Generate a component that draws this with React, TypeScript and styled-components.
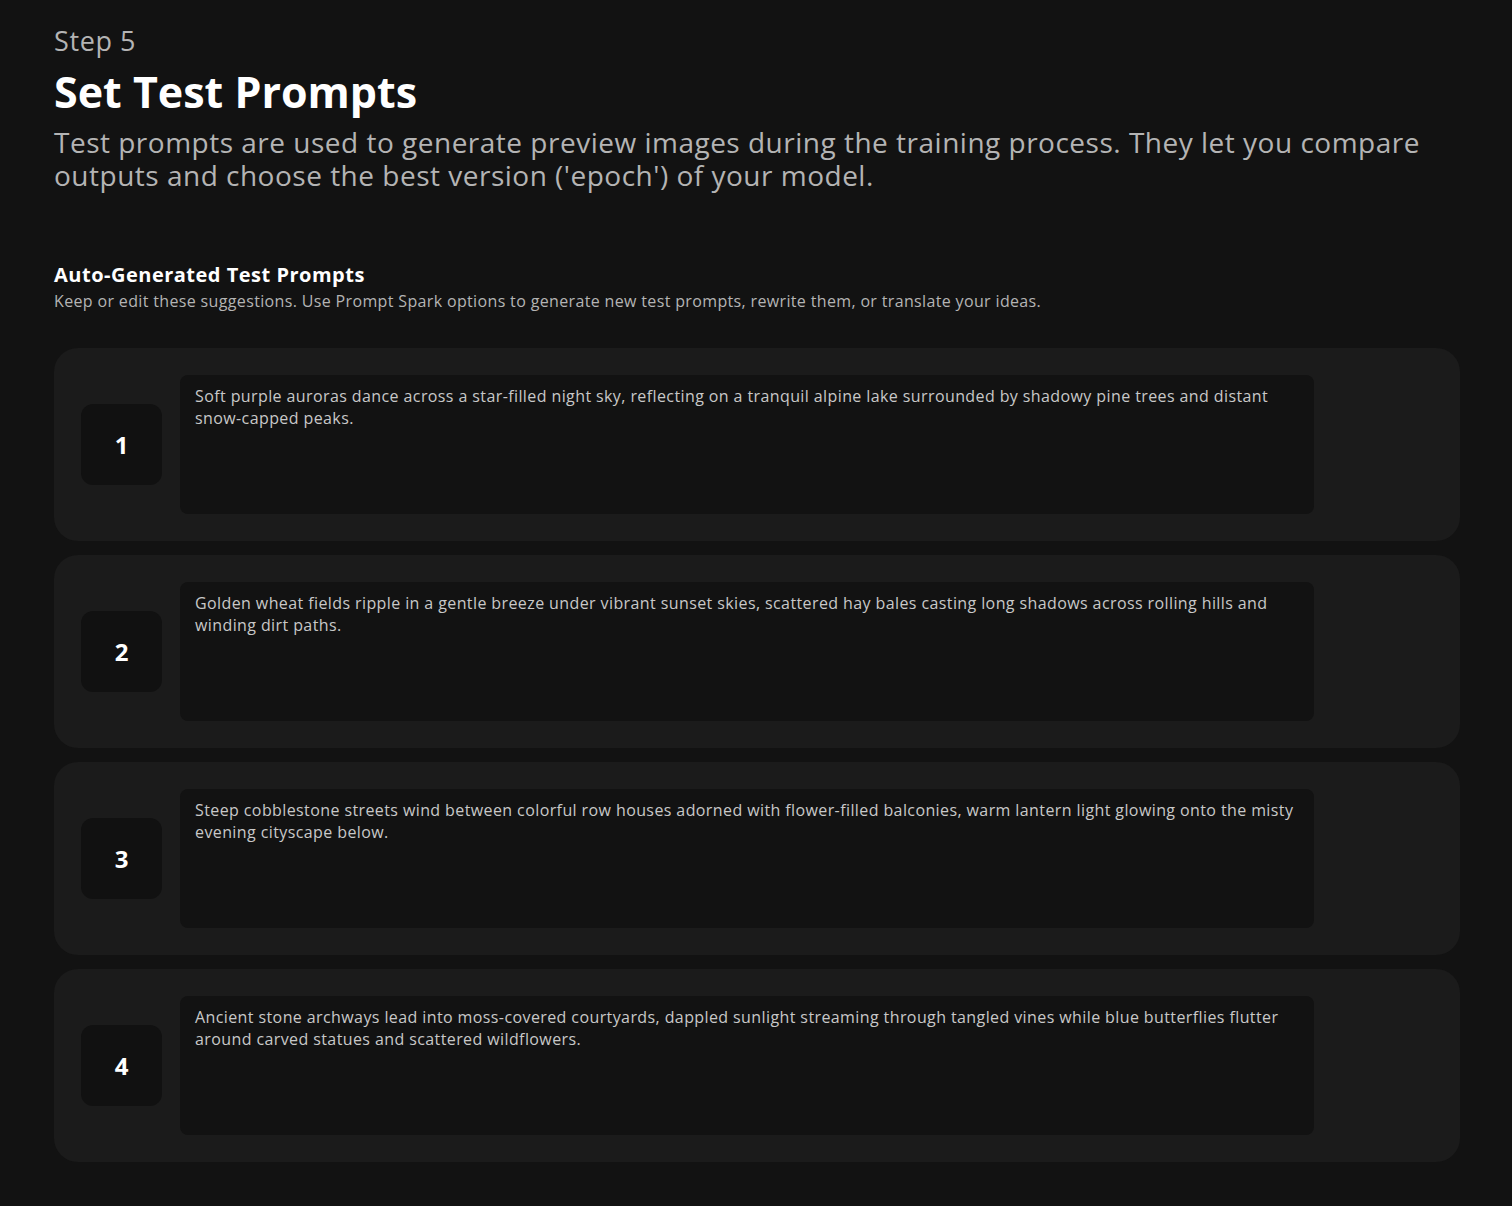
import styled, { createGlobalStyle } from "styled-components";

const GlobalStyle = createGlobalStyle`
  html, body {
    margin: 0;
    padding: 0;
    background: #121212;
  }
  body {
    font-family: "Open Sans", "Liberation Sans", sans-serif;
    color: #fff;
  }
`;

const Page = styled.main`
  padding: 24px 52px 44px 54px;
  display: flex;
  flex-direction: column;
`;

const StepLabel = styled.div`
  font-size: 27px;
  line-height: 34px;
  letter-spacing: 0.6px;
  color: #b4b4b4;
`;

const Title = styled.h1`
  margin: 7px 0 0;
  font-size: 43px;
  line-height: 54px;
  font-weight: 700;
  color: #ffffff;
`;

const Lead = styled.p`
  margin: 7px 0 0;
  font-size: 28px;
  line-height: 33px;
  letter-spacing: 0.5px;
  color: #b4b4b4;
  max-width: 1400px;
`;

const SectionHead = styled.div`
  margin-top: 70px;
  display: flex;
  flex-direction: column;
  gap: 2px;
`;

const SectionTitle = styled.h2`
  margin: 0;
  font-size: 20px;
  line-height: 26px;
  font-weight: 700;
  letter-spacing: 0.5px;
  color: #ffffff;
`;

const SectionNote = styled.p`
  margin: 0;
  font-size: 16px;
  line-height: 22px;
  letter-spacing: 0.35px;
  color: #b4b4b4;
`;

const List = styled.div`
  margin-top: 36px;
  display: flex;
  flex-direction: column;
  gap: 14px;
`;

const Card = styled.div`
  background: #1b1b1b;
  border-radius: 24px;
  padding: 27px 146px 27px 27px;
  display: grid;
  grid-template-columns: 81px 1fr;
  align-items: center;
  column-gap: 18px;
`;

const Num = styled.div`
  width: 81px;
  height: 81px;
  border-radius: 12px;
  background: #111111;
  display: flex;
  align-items: center;
  justify-content: center;
  font-size: 24px;
  font-weight: 700;
  color: #ffffff;
`;

const PromptBox = styled.textarea`
  box-sizing: border-box;
  height: 139px;
  width: 100%;
  resize: none;
  border: none;
  outline: none;
  border-radius: 8px;
  background: #121212;
  padding: 10px 15px;
  font-family: inherit;
  font-size: 16px;
  line-height: 22px;
  letter-spacing: 0.4px;
  color: #c8c8c8;
  overflow: hidden;
`;

const prompts = [
  "Soft purple auroras dance across a star-filled night sky, reflecting on a tranquil alpine lake surrounded by shadowy pine trees and distant snow-capped peaks.",
  "Golden wheat fields ripple in a gentle breeze under vibrant sunset skies, scattered hay bales casting long shadows across rolling hills and winding dirt paths.",
  "Steep cobblestone streets wind between colorful row houses adorned with flower-filled balconies, warm lantern light glowing onto the misty evening cityscape below.",
  "Ancient stone archways lead into moss-covered courtyards, dappled sunlight streaming through tangled vines while blue butterflies flutter around carved statues and scattered wildflowers.",
];

export default function App() {
  return (
    <>
      <GlobalStyle />
      <Page>
        <StepLabel>Step 5</StepLabel>
        <Title>Set Test Prompts</Title>
        <Lead>
          Test prompts are used to generate preview images during the training process. They let you
          compare outputs and choose the best version ('epoch') of your model.
        </Lead>

        <SectionHead>
          <SectionTitle>Auto-Generated Test Prompts</SectionTitle>
          <SectionNote>
            Keep or edit these suggestions. Use Prompt Spark options to generate new test prompts,
            rewrite them, or translate your ideas.
          </SectionNote>
        </SectionHead>

        <List>
          {prompts.map((p, i) => (
            <Card key={i}>
              <Num>{i + 1}</Num>
              <PromptBox defaultValue={p} spellCheck={false} />
            </Card>
          ))}
        </List>
      </Page>
    </>
  );
}
